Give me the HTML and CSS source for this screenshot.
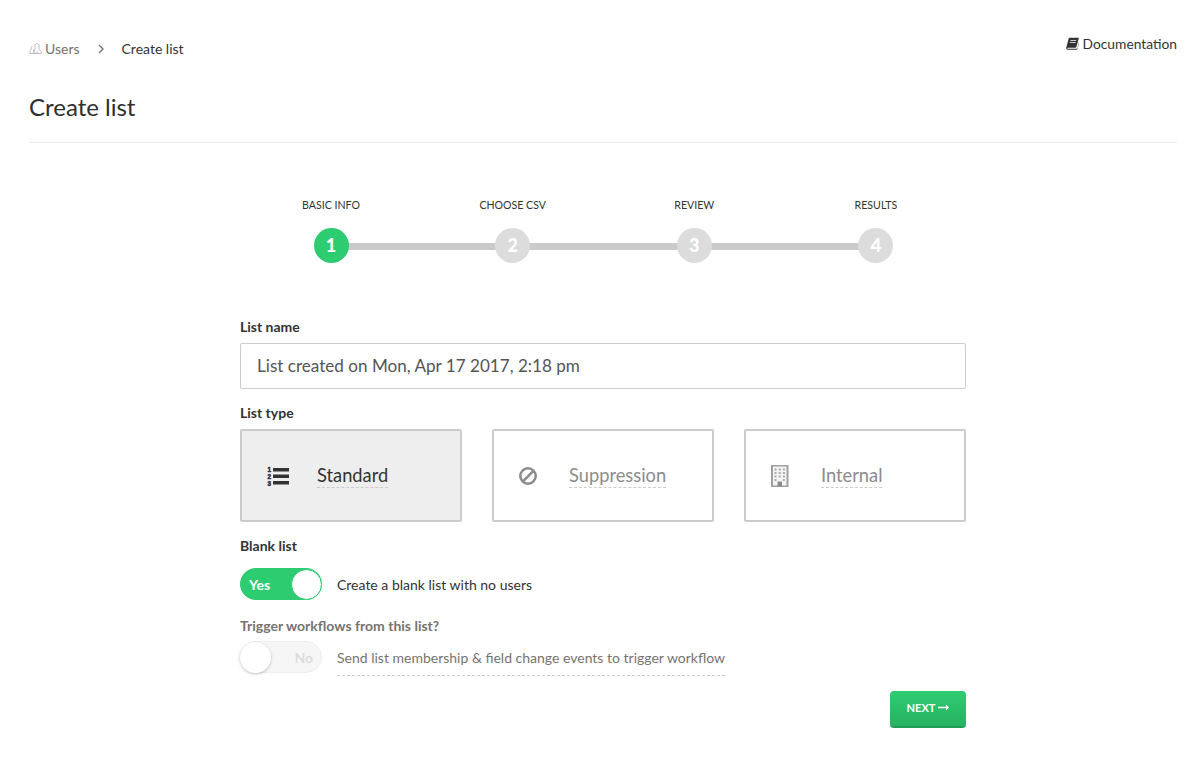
FILE: index.html
```html
<!DOCTYPE html>
<html lang="en">
<head>
    <meta charset="UTF-8">
    <title>Create list</title>
    <link rel="stylesheet" href="styles.css">
</head>
<body>
    <div class="topbar">
        <div class="breadcrumb">
            <svg class="users-icon" width="13" height="11" viewBox="0 0 13 11" fill="none" stroke="#b5b5b5" stroke-width="0.9"><path d="M0.5 10.5h12M1 10V8c0-.8 1.200-1 1.200-2V4.500c0-.8 .6-1.200 1.300-1.200M5 10V8c0-.8-.2-1-.2-2M5 10V7.500c.8-.5 1-1 1-1.800V2.500C6 1.300 6.800 .5 8 .5s2 .8 2 2v3.200c0 .8 .4 1.300 1.200 1.800 .7 .4 1.300 1 1.300 2.500M8 10V8"/></svg>
            <a class="crumb-link">Users</a>
            <svg class="crumb-sep" width="7" height="10" viewBox="0 0 7 10" fill="none" stroke="#777" stroke-width="1.4"><path d="M1 1l4 4-4 4"/></svg>
            <span class="crumb-current">Create list</span>
        </div>
        <a class="docs-link">
            <svg width="13" height="13" viewBox="0 0 13 13" fill="#333"><path d="M3.200 .8h9.200c.4 0 .5 .3 .4 .6l-2.400 8.400c-.2 .6-.5 .9-1.100 .9H1.900c-.5 0-.7 .4-.5 .7 .1 .2 .3 .3 .6 .3h8.700c.3 0 .5-.1 .6-.4l2-7 .2 .4-2.200 7.500c-.1 .4-.4 .6-.8 .6H1.800c-.9 0-1.600-.8-1.600-1.700 0-.2 0-.4 .1-.6L2.600 1.800C2.800 1.200 2.900 .8 3.200 .8zM4.500 3.200l-.2 .7h5.800l.2-.7zM3.900 5.200l-.2 .7h5.800l.2-.7z" fill-rule="evenodd"/></svg>
            Documentation
        </a>
    </div>
    <h1>Create list</h1>

    <div class="wizard">
        <div class="steps">
            <div class="step active"><span class="step-label">BASIC INFO</span><span class="step-dot">1</span></div>
            <div class="step"><span class="step-label">CHOOSE CSV</span><span class="step-dot">2</span></div>
            <div class="step"><span class="step-label">REVIEW</span><span class="step-dot">3</span></div>
            <div class="step"><span class="step-label">RESULTS</span><span class="step-dot">4</span></div>
        </div>

        <form class="form">
            <label class="field-label" for="listName">List name</label>
            <input class="text-input" type="text" id="listName" value="List created on Mon, Apr 17 2017, 2:18 pm">

            <div class="field-label type-label">List type</div>
            <div class="type-cards">
                <div class="type-card selected">
                    <svg class="type-icon" width="22" height="22" viewBox="0 0 22 22" fill="#333"><rect x="6" y="3" width="16" height="3.500"/><rect x="6" y="9.500" width="16" height="3.500"/><rect x="6" y="16" width="16" height="3.500"/><text x="0.500" y="6.500" class="icon-num">1</text><text x="0.500" y="13.900" class="icon-num">2</text><text x="0.500" y="21.300" class="icon-num">3</text></svg>
                    <span class="type-name">Standard</span>
                </div>
                <div class="type-card">
                    <svg class="type-icon" width="22" height="22" viewBox="0 0 22 22" fill="none" stroke="#8c8c8c" stroke-width="2.500"><circle cx="9" cy="11" r="7.700"/><path d="M3.800 16.500L14.500 5.800"/></svg>
                    <span class="type-name">Suppression</span>
                </div>
                <div class="type-card">
                    <svg class="type-icon" width="22" height="22" viewBox="0 0 22 22"><rect x="1" y="0.500" width="15.500" height="21" fill="#f4f4f4" stroke="#a0a0a0" stroke-width="2"/><path fill="#a8a8a8" d="M3.500 3.500h2v2h-2zM7.700 3.500h2v2h-2zM11.900 3.500h2v2h-2zM3.500 7h2v2h-2zM7.700 7h2v2h-2zM11.900 7h2v2h-2zM3.500 10.500h2v2h-2zM7.700 10.500h2v2h-2zM11.900 10.500h2v2h-2zM3.500 14h2v2h-2zM11.900 14h2v2h-2z"/><rect x="6.500" y="16.500" width="4.500" height="5" fill="#8c8c8c"/></svg>
                    <span class="type-name">Internal</span>
                </div>
            </div>

            <div class="field-label blank-label">Blank list</div>
            <div class="toggle-row blank-row">
                <div class="toggle on"><span class="toggle-text">Yes</span><span class="knob"></span></div>
                <span class="toggle-desc">Create a blank list with no users</span>
            </div>

            <div class="field-label muted trigger-label">Trigger workflows from this list?</div>
            <div class="toggle-row trigger-row">
                <div class="toggle off"><span class="knob"></span><span class="toggle-text">No</span></div>
                <span class="toggle-desc dashed">Send list membership &amp; field change events to trigger workflow</span>
            </div>

            <div class="actions">
                <button class="next-btn" type="button">NEXT <svg width="11" height="7" viewBox="0 0 11 7" fill="#fff"><path d="M0 2.800h8V.5l3 3-3 3V4.200H0z"/></svg></button>
            </div>
        </form>
    </div>
</body>
</html>
```

FILE: styles.css
```css
body {
    font-family: "Lato", "Liberation Sans", sans-serif;
    margin: 0;
    padding: 0 26px 0 29px;
    background-color: #fff;
    color: #333;
    font-size: 14px;
}
.topbar {
    display: flex;
    justify-content: space-between;
    align-items: flex-start;
    height: 94px;
    padding-top: 35px;
    box-sizing: border-box;
}
.breadcrumb {
    display: flex;
    align-items: center;
    margin-top: 5px;
    height: 17px;
}
.users-icon {
    margin-right: 3px;
}
.crumb-link {
    color: #77736f;
    font-size: 14px;
}
.crumb-sep {
    margin: 0 17px 0 18px;
}
.crumb-current {
    color: #333;
    font-size: 14px;
}
.docs-link {
    display: flex;
    align-items: center;
    gap: 4px;
    height: 17px;
    font-size: 13.800px;
    color: #333;
}
h1 {
    font-size: 24px;
    font-weight: 400;
    line-height: 26px;
    margin: 0;
    padding-bottom: 22px;
    border-bottom: 1px solid #ebebeb;
    color: #2e2e2e;
}
.wizard {
    width: 726px;
    margin: 0 0 0 211px;
}
.steps {
    display: flex;
    justify-content: space-between;
    width: 609px;
    margin: 55px 0 0 59px;
    position: relative;
}
.steps::before {
    content: "";
    position: absolute;
    left: 32px;
    right: 32px;
    top: 45px;
    height: 7px;
    background-color: #cacaca;
}
.step {
    position: relative;
    display: flex;
    flex-direction: column;
    align-items: center;
    width: 64px;
    white-space: nowrap;
}
.step-label {
    font-size: 10.600px;
    line-height: 14px;
    color: #333;
}
.step-dot {
    width: 35px;
    height: 35px;
    margin-top: 16px;
    border-radius: 50%;
    background-color: #dcdcdc;
    color: #fff;
    font-size: 18px;
    font-weight: 900;
    line-height: 35px;
    text-align: center;
}
.step.active .step-dot {
    background-color: #2ecc71;
}
.form {
    margin-top: 55px;
}
.field-label {
    display: block;
    font-size: 14px;
    font-weight: 700;
    line-height: 17px;
    color: #333;
}
.field-label.muted {
    color: #77736f;
}
.text-input {
    display: block;
    width: 100%;
    height: 46px;
    box-sizing: border-box;
    margin-top: 8px;
    padding: 0 16px 2px;
    border: 1px solid #ccc;
    border-radius: 2px;
    font-family: inherit;
    font-size: 17.100px;
    color: #555;
}
.type-label {
    margin-top: 15px;
}
.type-cards {
    display: grid;
    grid-template-columns: repeat(3, 222px);
    justify-content: space-between;
    margin-top: 8px;
}
.type-card {
    display: flex;
    align-items: center;
    height: 93px;
    box-sizing: border-box;
    padding-left: 25px;
    border: 2px solid #ccc;
    border-radius: 2px;
    color: #8c8c8c;
}
.type-card.selected {
    background-color: #eee;
    color: #333;
}
.type-icon {
    margin-right: 28px;
}
.icon-num {
    font-family: "Liberation Sans", sans-serif;
    font-size: 6.300px;
    font-weight: 700;
    fill: #333;
    stroke: #333;
    stroke-width: 0.5px;
}
.type-name {
    font-size: 18.300px;
    line-height: 22px;
    border-bottom: 1px dashed #ccc;
    padding-bottom: 1px;
}
.blank-label {
    margin-top: 15px;
}
.toggle-row {
    display: flex;
    align-items: flex-start;
}
.blank-row {
    height: 32px;
    margin-top: 14px;
}
.trigger-row {
    margin-top: 7px;
}
.toggle {
    display: flex;
    align-items: center;
    justify-content: space-between;
    width: 82px;
    height: 32px;
    box-sizing: border-box;
    border-radius: 16px;
    font-size: 14px;
    font-weight: 700;
    margin-right: 15px;
    flex-shrink: 0;
}
.toggle.on {
    background-color: #2ecc71;
    color: #fff;
    padding: 0 0 0 9px;
}
.toggle.off {
    background-color: #f6f6f6;
    border: 1px solid #eee;
    color: #ddd;
    padding-right: 8px;
}
.knob {
    width: 31px;
    height: 31px;
    box-sizing: border-box;
    border-radius: 50%;
    background-color: #fff;
}
.toggle.on .knob {
    border: 1px solid #2ecc71;
}
.toggle.off .knob {
    box-shadow: 0 1px 3px rgba(0, 0, 0, 0.25);
    margin-left: -1px;
}
.toggle-desc {
    font-size: 14px;
    line-height: 34px;
    color: #333;
}
.toggle-desc.dashed {
    color: #77736f;
    height: 34px;
    border-bottom: 1px dashed #ccc;
}
.trigger-label {
    margin-top: 17px;
}
.actions {
    display: flex;
    justify-content: flex-end;
    margin-top: 15px;
}
.next-btn {
    display: flex;
    align-items: center;
    justify-content: center;
    gap: 3px;
    width: 76px;
    height: 37px;
    padding: 0 0 2px;
    border: none;
    border-bottom: 2px solid #1f9d55;
    border-radius: 4px;
    background: linear-gradient(#2ecc71, #27b262);
    color: #fff;
    font-family: inherit;
    font-size: 11px;
    font-weight: 700;
}
```
